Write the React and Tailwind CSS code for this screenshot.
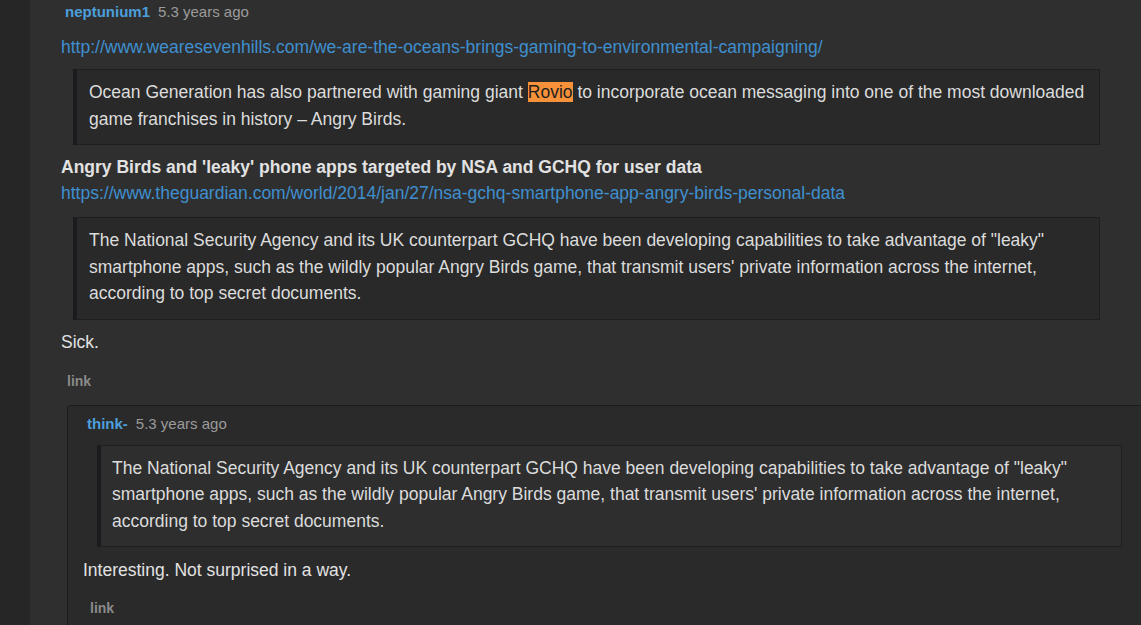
import React from "react";

const FONT = { fontFamily: '"Liberation Sans", Arial, sans-serif' };

function Header({ user, ago }) {
  return (
    <div className="flex items-baseline gap-[8px] leading-[20px]">
      <span className="text-[15px] font-bold text-[#4c9fdc]">{user}</span>
      <span className="text-[15px] text-[#9b9b9b]">{ago}</span>
    </div>
  );
}

function Quote({ lines, className = "" }) {
  return (
    <div
      className={
        "border border-[#1f1f1f] border-l-[4px] border-l-[#1b1b1f] pl-[12px] pt-[9px] pb-[12px] text-[17.5px] leading-[26.5px] text-[#dcdcdc] whitespace-nowrap " +
        className
      }
    >
      {lines.map((l, i) => (
        <div key={i}>{l}</div>
      ))}
    </div>
  );
}

const nsaLines = [
  'The National Security Agency and its UK counterpart GCHQ have been developing capabilities to take advantage of "leaky"',
  "smartphone apps, such as the wildly popular Angry Birds game, that transmit users' private information across the internet,",
  "according to top secret documents.",
];

export default function App() {
  return (
    <div className="w-[1141px] h-[625px] overflow-hidden flex bg-[#2f2f2f]" style={FONT}>
      <div className="w-[30px] shrink-0 bg-[#262626]" />
      <div className="flex-1 min-w-0 pl-[31px] pt-[2px]">
        <div className="w-[1051px]">
          <div className="pl-[4px]">
            <Header user="neptunium1" ago="5.3 years ago" />
          </div>
          <div className="mt-[12px] text-[17.5px] leading-[26px] text-[#3f8fcf]">
            http://www.wearesevenhills.com/we-are-the-oceans-brings-gaming-to-environmental-campaigning/
          </div>
          <Quote
            className="mt-[9px] ml-[12px] mr-[12px] bg-[#292929]"
            lines={[
              <>
                Ocean Generation has also partnered with gaming giant{" "}
                <span className="bg-[#f7923b] text-[#1e1e1e]">Rovio</span> to incorporate ocean messaging into one of the
                most downloaded
              </>,
              "game franchises in history – Angry Birds.",
            ]}
          />
          <div className="mt-[9px] text-[17.5px] leading-[26px] font-bold text-[#e2e2e2]">
            Angry Birds and 'leaky' phone apps targeted by NSA and GCHQ for user data
          </div>
          <div className="text-[17.5px] leading-[26px] text-[#3f8fcf]">
            https://www.theguardian.com/world/2014/jan/27/nsa-gchq-smartphone-app-angry-birds-personal-data
          </div>
          <Quote className="mt-[11px] ml-[12px] mr-[12px] bg-[#292929]" lines={nsaLines} />
          <div className="mt-[9px] text-[17.5px] leading-[26px] text-[#e2e2e2]">Sick.</div>
          <div className="mt-[16px] pl-[6px] text-[14px] leading-[20px] font-bold text-[#8a8a8a]">link</div>
        </div>
        <div className="mt-[14px] ml-[6px] w-[1200px] border-t border-l border-[#1c1c1c] rounded-tl-[4px] bg-[#2a2a2a] pl-[15px] pt-[8px] pb-[20px]">
          <div className="w-[1051px]">
            <div className="pl-[4px]">
              <Header user="think-" ago="5.3 years ago" />
            </div>
            <Quote className="mt-[11px] ml-[14px] mr-[12px] bg-[#2e2e2e] !pl-[11px]" lines={nsaLines} />
            <div className="mt-[10px] text-[17.5px] leading-[26px] text-[#e2e2e2]">Interesting. Not surprised in a way.</div>
            <div className="mt-[15px] pl-[7px] text-[14px] leading-[20px] font-bold text-[#8a8a8a]">link</div>
          </div>
        </div>
      </div>
    </div>
  );
}
